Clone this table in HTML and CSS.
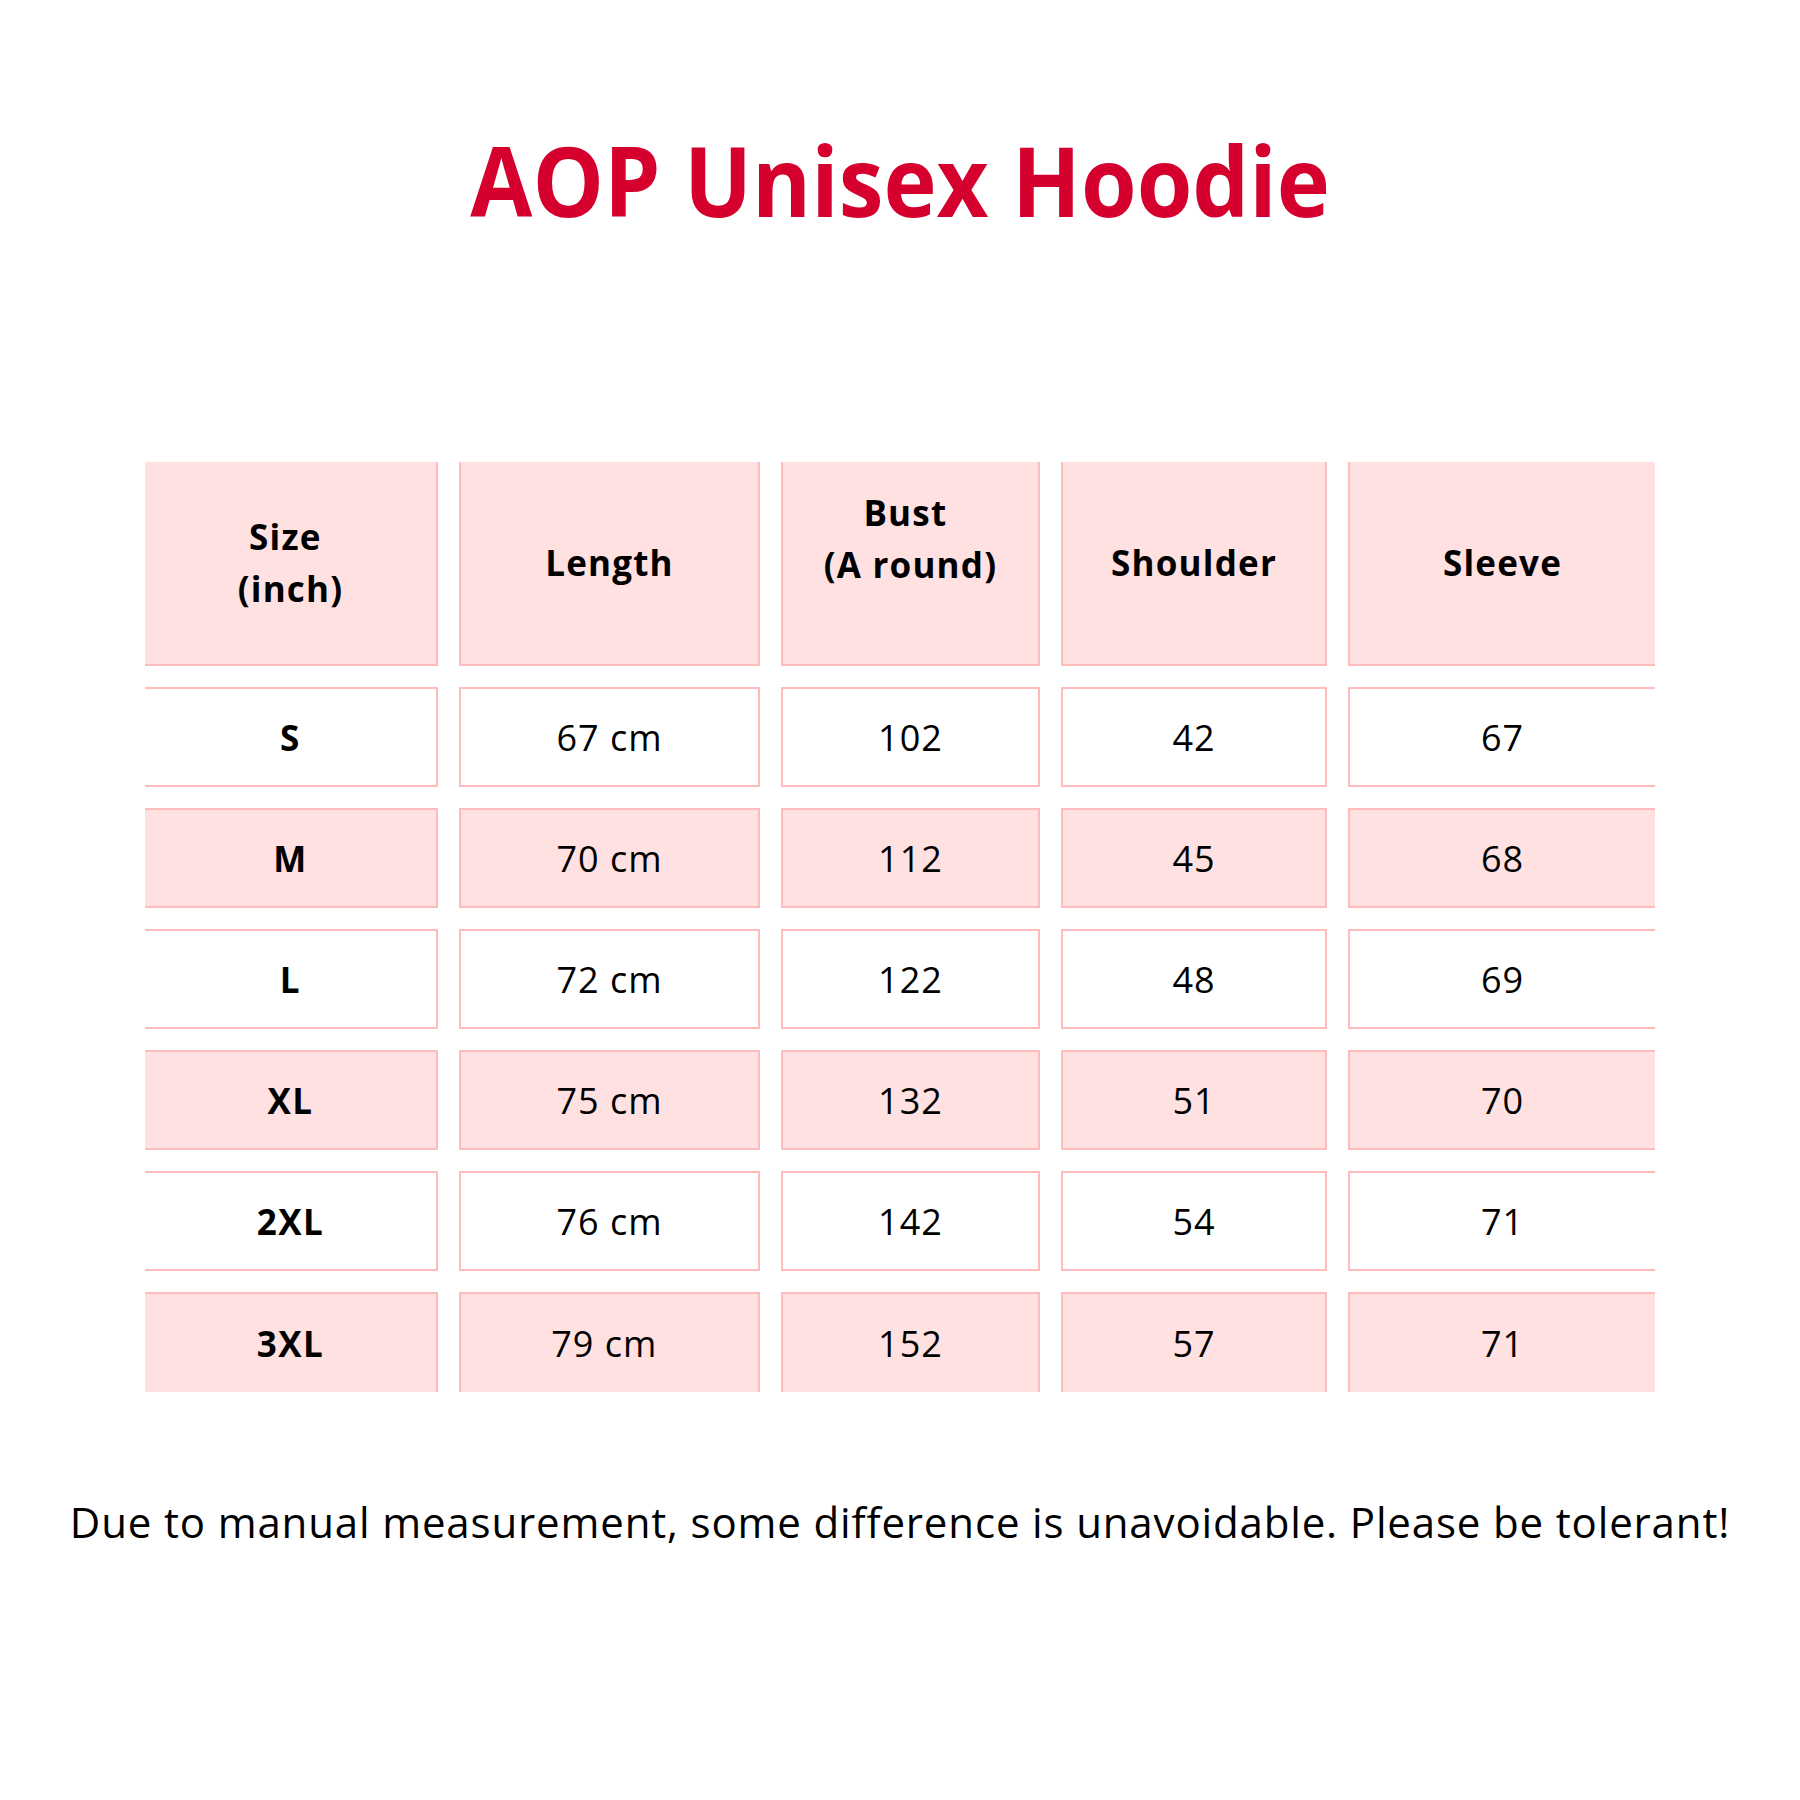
FILE: index.html
```html
<!DOCTYPE html>
<html lang="en">
<head>
<meta charset="utf-8">
<title>AOP Unisex Hoodie</title>
<link rel="stylesheet" href="styles.css">
</head>
<body>
<main class="page">
  <h1 class="title">AOP Unisex Hoodie</h1>
  <div class="chart">
    <div class="cell head first">Size&nbsp;<br>(inch)</div>
    <div class="cell head">Length</div>
    <div class="cell head raised">Bust&nbsp;<br>(A round)</div>
    <div class="cell head">Shoulder</div>
    <div class="cell head last">Sleeve</div>

    <div class="cell row first size">S</div>
    <div class="cell row">67 cm</div>
    <div class="cell row">102</div>
    <div class="cell row">42</div>
    <div class="cell row last">67</div>

    <div class="cell row pink first size">M</div>
    <div class="cell row pink">70 cm</div>
    <div class="cell row pink">112</div>
    <div class="cell row pink">45</div>
    <div class="cell row pink last">68</div>

    <div class="cell row first size">L</div>
    <div class="cell row">72 cm</div>
    <div class="cell row">122</div>
    <div class="cell row">48</div>
    <div class="cell row last">69</div>

    <div class="cell row pink first size">XL</div>
    <div class="cell row pink">75 cm</div>
    <div class="cell row pink">132</div>
    <div class="cell row pink">51</div>
    <div class="cell row pink last">70</div>

    <div class="cell row first size">2XL</div>
    <div class="cell row">76 cm</div>
    <div class="cell row">142</div>
    <div class="cell row">54</div>
    <div class="cell row last">71</div>

    <div class="cell row pink first size bottom">3XL</div>
    <div class="cell row pink bottom">79 cm&nbsp;</div>
    <div class="cell row pink bottom">152</div>
    <div class="cell row pink bottom">57</div>
    <div class="cell row pink last bottom">71</div>
  </div>
  <p class="note">Due to manual measurement, some difference is unavoidable. Please be tolerant!</p>
</main>
</body>
</html>
```

FILE: styles.css
```css
html, body {
  margin: 0;
  padding: 0;
  background: #ffffff;
}

.page {
  width: 1800px;
  height: 1800px;
  display: flex;
  flex-direction: column;
  align-items: center;
  font-family: "Open Sans", "Noto Sans", sans-serif;
  color: #000000;
}

.title {
  margin: 131px 0 0 0;
  font-size: 97px;
  line-height: 1;
  font-weight: 700;
  color: #d6002f;
  letter-spacing: 0;
  white-space: nowrap;
  transform: scaleX(0.928);
}

.chart {
  margin-top: 234px;
  display: grid;
  grid-template-columns: 293px 301px 259px 266px 307px;
  grid-template-rows: 204px repeat(6, 100px);
  column-gap: 21px;
  row-gap: 21px;
}

.cell {
  box-sizing: border-box;
  display: flex;
  align-items: center;
  justify-content: center;
  text-align: center;
  font-size: 36px;
  letter-spacing: 1px;
  border: 2px solid #ffbcbd;
}

.head {
  background: #ffe1e2;
  font-weight: 700;
  font-size: 35px;
  letter-spacing: 1.2px;
  line-height: 52px;
  border-top: none;
}

.head.raised {
  padding-bottom: 48px;
}

.row {
  background: #ffffff;
  font-weight: 400;
}

.row.pink {
  background: #ffe1e2;
}

.size {
  font-weight: 700;
  font-size: 35px;
  letter-spacing: 1.5px;
}

.first {
  border-left: none;
}

.last {
  border-right: none;
}

.bottom {
  border-bottom: none;
}

.note {
  margin: 109px 0 0 0;
  font-size: 42px;
  line-height: 1;
  font-weight: 400;
  letter-spacing: 0.85px;
  white-space: nowrap;
}
```
